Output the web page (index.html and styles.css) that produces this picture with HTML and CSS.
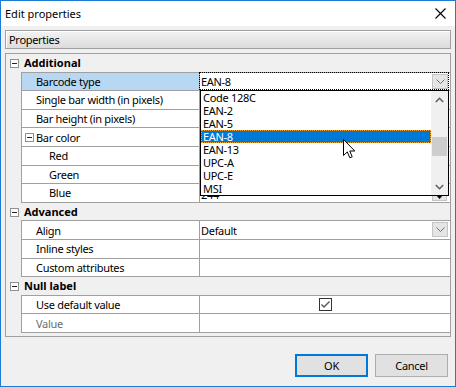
FILE: index.html
```html
<!DOCTYPE html>
<html>
<head>
  <title>Edit properties</title>
  <link rel="stylesheet" href="styles.css">
</head>
<body>
  <div class="window">
    <div class="titlebar">
      <span class="title">Edit properties</span>
      <svg class="close" width="11" height="11" viewBox="0 0 11 11"><path d="M0.5 0.5L10.5 10.5M10.5 0.5L0.5 10.5" stroke="#000" stroke-width="1.1" fill="none"/></svg>
    </div>

    <div class="client">
      <div class="panel-head">Properties</div>

      <div class="grid">
        <div class="row cat">
          <span class="gutter"><i class="toggle"></i></span>
          <span class="cat-name">Additional</span>
        </div>
        <div class="row selected">
          <span class="gutter"></span>
          <span class="name">Barcode type</span>
          <span class="value focus">EAN-8
            <span class="drop-btn"><svg width="9" height="5" viewBox="0 0 9 5"><path d="M0.5 0.5L4.5 4.5L8.5 0.5" stroke="#707070" fill="none"/></svg></span>
          </span>
        </div>
        <div class="row">
          <span class="gutter"></span>
          <span class="name">Single bar width (in pixels)</span>
          <span class="value"></span>
        </div>
        <div class="row">
          <span class="gutter"></span>
          <span class="name">Bar height (in pixels)</span>
          <span class="value"></span>
        </div>
        <div class="row">
          <span class="gutter"></span>
          <span class="name sub"><i class="toggle"></i>Bar color</span>
          <span class="value"></span>
        </div>
        <div class="row">
          <span class="gutter"></span>
          <span class="name child">Red</span>
          <span class="value"></span>
        </div>
        <div class="row">
          <span class="gutter"></span>
          <span class="name child">Green</span>
          <span class="value"></span>
        </div>
        <div class="row">
          <span class="gutter"></span>
          <span class="name child">Blue</span>
          <span class="value low">244
            <span class="spin"><span class="spin-up"></span><span class="spin-down"><svg width="7" height="4" viewBox="0 0 7 4"><path d="M0 0H7L3.5 4Z" fill="#000"/></svg></span></span>
          </span>
        </div>

        <div class="row cat">
          <span class="gutter"><i class="toggle"></i></span>
          <span class="cat-name">Advanced</span>
        </div>
        <div class="row">
          <span class="gutter"></span>
          <span class="name">Align</span>
          <span class="value">Default
            <span class="drop-btn"><svg width="9" height="5" viewBox="0 0 9 5"><path d="M0.5 0.5L4.5 4.5L8.5 0.5" stroke="#707070" fill="none"/></svg></span>
          </span>
        </div>
        <div class="row">
          <span class="gutter"></span>
          <span class="name">Inline styles</span>
          <span class="value"></span>
        </div>
        <div class="row">
          <span class="gutter"></span>
          <span class="name">Custom attributes</span>
          <span class="value"></span>
        </div>

        <div class="row cat">
          <span class="gutter"><i class="toggle"></i></span>
          <span class="cat-name">Null label</span>
        </div>
        <div class="row">
          <span class="gutter"></span>
          <span class="name">Use default value</span>
          <span class="value center">
            <span class="checkbox"><svg width="11" height="11" viewBox="0 0 11 11"><path d="M1.5 5.5L4 8L9.5 2.5" stroke="#555" stroke-width="1.4" fill="none"/></svg></span>
          </span>
        </div>
        <div class="row">
          <span class="gutter"></span>
          <span class="name disabled">Value</span>
          <span class="value"></span>
        </div>

        <!-- open combo list for Barcode type -->
        <div class="droplist">
          <div class="items">
            <div class="item">Code 128C</div>
            <div class="item">EAN-2</div>
            <div class="item">EAN-5</div>
            <div class="item active">EAN-8</div>
            <div class="item">EAN-13</div>
            <div class="item">UPC-A</div>
            <div class="item">UPC-E</div>
            <div class="item">MSI</div>
          </div>
          <div class="scrollbar">
            <svg class="arrow" width="9" height="6" viewBox="0 0 9 6"><path d="M0.8 5L4.5 1.3L8.2 5" stroke="#606060" stroke-width="1.6" fill="none"/></svg>
            <div class="track"><div class="thumb"></div></div>
            <svg class="arrow" width="9" height="6" viewBox="0 0 9 6"><path d="M0.8 1L4.5 4.7L8.2 1" stroke="#606060" stroke-width="1.6" fill="none"/></svg>
          </div>
        </div>
      </div>

      <div class="buttons">
        <button class="btn default">OK</button>
        <button class="btn">Cancel</button>
      </div>
    </div>

    <svg class="cursor" width="13" height="20" viewBox="0 0 13 20"><path d="M0.5 0.5V16.5L4.3 12.9L6.8 18.8L9.2 17.8L6.8 12H11.8Z" fill="#fff" stroke="#000" stroke-width="1" stroke-linejoin="miter"/></svg>
  </div>
</body>
</html>
```

FILE: styles.css
```css
* {
  box-sizing: border-box;
}
html, body {
  margin: 0;
  padding: 0;
}
body {
  font: 11px "Noto Sans", "Liberation Sans", sans-serif;
  letter-spacing: -0.3px;
  color: #000;
  width: 456px;
  height: 387px;
  overflow: hidden;
}
.window {
  position: relative;
  width: 456px;
  height: 387px;
  border: 1px solid #1c7cd5;
  background: #f0f0f0;
  display: flex;
  flex-direction: column;
}
.titlebar {
  height: 25px;
  flex: none;
  background: #fff;
  display: flex;
  align-items: center;
  justify-content: space-between;
  padding: 0 9px 0 4px;
}
.title {
  letter-spacing: 0;
}
.close {
  display: block;
}
.client {
  flex: 1;
  padding: 4px 4px 0 4px;
  display: flex;
  flex-direction: column;
}
.panel-head {
  height: 19px;
  flex: none;
  border: 1px solid #a0a0a0;
  background: linear-gradient(to bottom, #f3f3f3, #dcdcdc);
  box-shadow: inset 1px 1px 0 #fff;
  padding-left: 3px;
  display: flex;
  align-items: center;
}

/* property grid */
.grid {
  position: relative;
  margin-top: 4px;
  height: 284px;
  flex: none;
  border: 1px solid #a0a0a0;
  background: #f0f0f0;
}
.row {
  display: flex;
  height: 18.6px;
}
.gutter {
  width: 15px;
  flex: none;
  display: flex;
  align-items: center;
  padding-left: 4px;
}
.toggle {
  display: block;
  position: relative;
  width: 9px;
  height: 9px;
  flex: none;
  border: 1px solid #919191;
  background: #fff;
}
.toggle::after {
  content: "";
  position: absolute;
  left: 1px;
  top: 3px;
  width: 5px;
  height: 1px;
  background: #222;
}
.cat-name {
  flex: 1;
  font-weight: bold;
  letter-spacing: 0;
  padding-left: 3px;
  border-bottom: 1px solid #a0a0a0;
  display: flex;
  align-items: center;
}
.name {
  width: 179px;
  flex: none;
  background: #fff;
  border-left: 1px solid #a0a0a0;
  border-right: 1px solid #a0a0a0;
  border-bottom: 1px solid #a0a0a0;
  padding-left: 14px;
  display: flex;
  align-items: center;
  white-space: nowrap;
}
.name.sub {
  padding-left: 3px;
}
.name.sub .toggle {
  margin-right: 2px;
}
.name.child {
  padding-left: 27px;
}
.name.disabled {
  color: #6d6d6d;
}
.row.selected .name {
  background: #b8d7f2;
}
.value {
  flex: 1;
  position: relative;
  background: #fff;
  border-bottom: 1px solid #a0a0a0;
  padding-left: 1px;
  display: flex;
  align-items: center;
}
.value.low {
  padding-top: 3px;
}
.value.center {
  justify-content: center;
}
.value.focus::before {
  content: "";
  position: absolute;
  left: -1px;
  top: -1px;
  right: 1px;
  bottom: 0;
  border: 1px dotted #000;
}
.drop-btn {
  position: absolute;
  right: 2px;
  top: 1px;
  width: 16px;
  height: 15px;
  background: #e5e5e5;
  border: 1px solid #c4c4c4;
  display: flex;
  align-items: center;
  justify-content: center;
}
.drop-btn svg {
  display: block;
}
.spin {
  position: absolute;
  right: 3px;
  top: 1px;
  width: 15px;
  height: 16px;
  display: flex;
  flex-direction: column;
}
.spin-up, .spin-down {
  flex: 1;
  background: #e5e5e5;
  border: 1px solid #c4c4c4;
  display: flex;
  align-items: center;
  justify-content: center;
}
.spin-down svg {
  display: block;
}
.checkbox {
  width: 13px;
  height: 13px;
  border: 1px solid #333;
  background: #fff;
  display: flex;
  align-items: center;
  justify-content: center;
}

/* open combo list */
.droplist {
  position: absolute;
  left: 194px;
  top: 36px;
  width: 249px;
  height: 106px;
  border: 1px solid #000;
  background: #fff;
  display: flex;
}
.items {
  flex: 1;
}
.item {
  height: 13px;
  line-height: 13px;
  padding-left: 2px;
  white-space: nowrap;
}
.item.active {
  background: #0078d7;
  color: #fff;
  border: 1px dotted #f0a030;
  line-height: 11px;
  padding-left: 1px;
}
.scrollbar {
  width: 17px;
  flex: none;
  background: #f0f0f0;
  display: flex;
  flex-direction: column;
  align-items: center;
  padding: 6px 0 5px;
}
.arrow {
  display: block;
  flex: none;
}
.track {
  flex: 1;
  width: 100%;
  padding-top: 34px;
}
.thumb {
  margin: 0 1px;
  height: 19px;
  background: #cdcdcd;
}

/* dialog buttons */
.buttons {
  margin-top: 17px;
  margin-right: 3px;
  display: flex;
  justify-content: flex-end;
  gap: 7px;
}
.btn {
  width: 73px;
  height: 23px;
  font: inherit;
  letter-spacing: -0.3px;
  color: #000;
  background: #e1e1e1;
  border: 1px solid #adadad;
  padding: 0;
}
.btn.default {
  border: 2px solid #0078d7;
}

.cursor {
  position: absolute;
  left: 342px;
  top: 138px;
}
```
